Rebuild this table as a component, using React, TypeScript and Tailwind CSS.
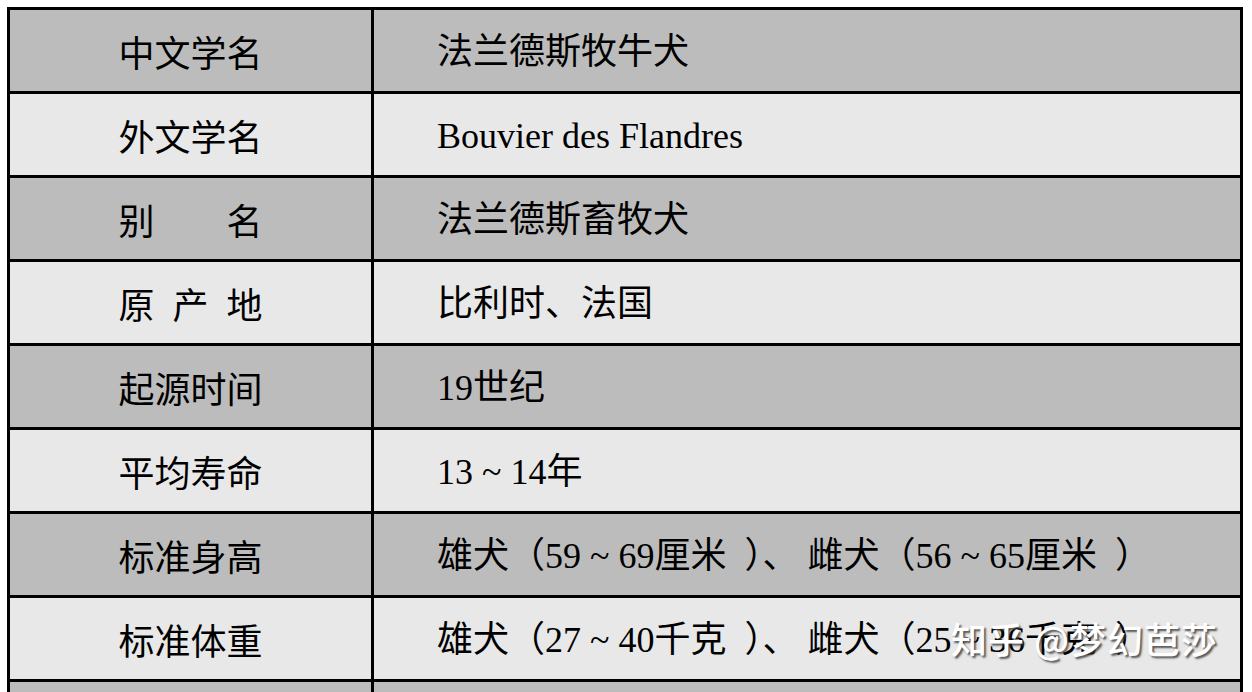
import React from "react";

type Row = {
  label: string[];
  value: string;
  tone: "dark" | "light";
};

const ROWS: Row[] = [
  { label: ["中文学名"], value: "法兰德斯牧牛犬", tone: "dark" },
  { label: ["外文学名"], value: "Bouvier des Flandres", tone: "light" },
  { label: ["别", "名"], value: "法兰德斯畜牧犬", tone: "dark" },
  { label: ["原", "产", "地"], value: "比利时、法国", tone: "light" },
  { label: ["起源时间"], value: "19世纪", tone: "dark" },
  { label: ["平均寿命"], value: "13 ~ 14年", tone: "light" },
  { label: ["标准身高"], value: "雄犬（59 ~ 69厘米  ）、 雌犬（56 ~ 65厘米  ）", tone: "dark" },
  { label: ["标准体重"], value: "雄犬（27 ~ 40千克  ）、 雌犬（25 ~ 36千克  ）", tone: "light" },
  { label: [], value: "", tone: "dark" },
];

const CJK = "font-['Noto_Sans_CJK_SC','Noto_Sans',sans-serif]";
const VALUE_FONT = "font-['Liberation_Serif','Noto_Sans_CJK_SC',serif]";

export default function App() {
  return (
    <div className="relative h-[692px] w-full overflow-hidden bg-white">
      <div className="ml-[7px] mt-[7px] w-[1236px] border-[3px] border-b-0 border-black">
        {ROWS.map((row, i) => (
          <div
            key={i}
            className={`flex h-[84px] border-b-[3px] border-black text-[36px] leading-none text-black ${
              row.tone === "dark" ? "bg-[#bdbcbc]" : "bg-[#e8e8e8]"
            }`}
          >
            {/* label cell */}
            <div className={`flex w-[361px] shrink-0 items-center justify-center pt-[1px] ${CJK}`}>
              {row.label.length > 1 ? (
                <div className="flex w-[144px] justify-between">
                  {row.label.map((ch) => (
                    <span key={ch}>{ch}</span>
                  ))}
                </div>
              ) : (
                <span>{row.label[0]}</span>
              )}
            </div>
            {/* value cell */}
            <div
              className={`flex flex-1 items-center border-l-[3px] border-black pl-[63px] pt-[3px] whitespace-pre ${VALUE_FONT}`}
            >
              {row.value}
            </div>
          </div>
        ))}
      </div>

      {/* watermark */}
      <div
        className={`absolute left-[951px] top-[620px] text-[36px] font-medium leading-none tracking-[1px] text-white [text-shadow:2px_2px_2px_rgba(50,50,50,0.8)] ${CJK}`}
      >
        知乎 @梦幻芭莎
      </div>
    </div>
  );
}
